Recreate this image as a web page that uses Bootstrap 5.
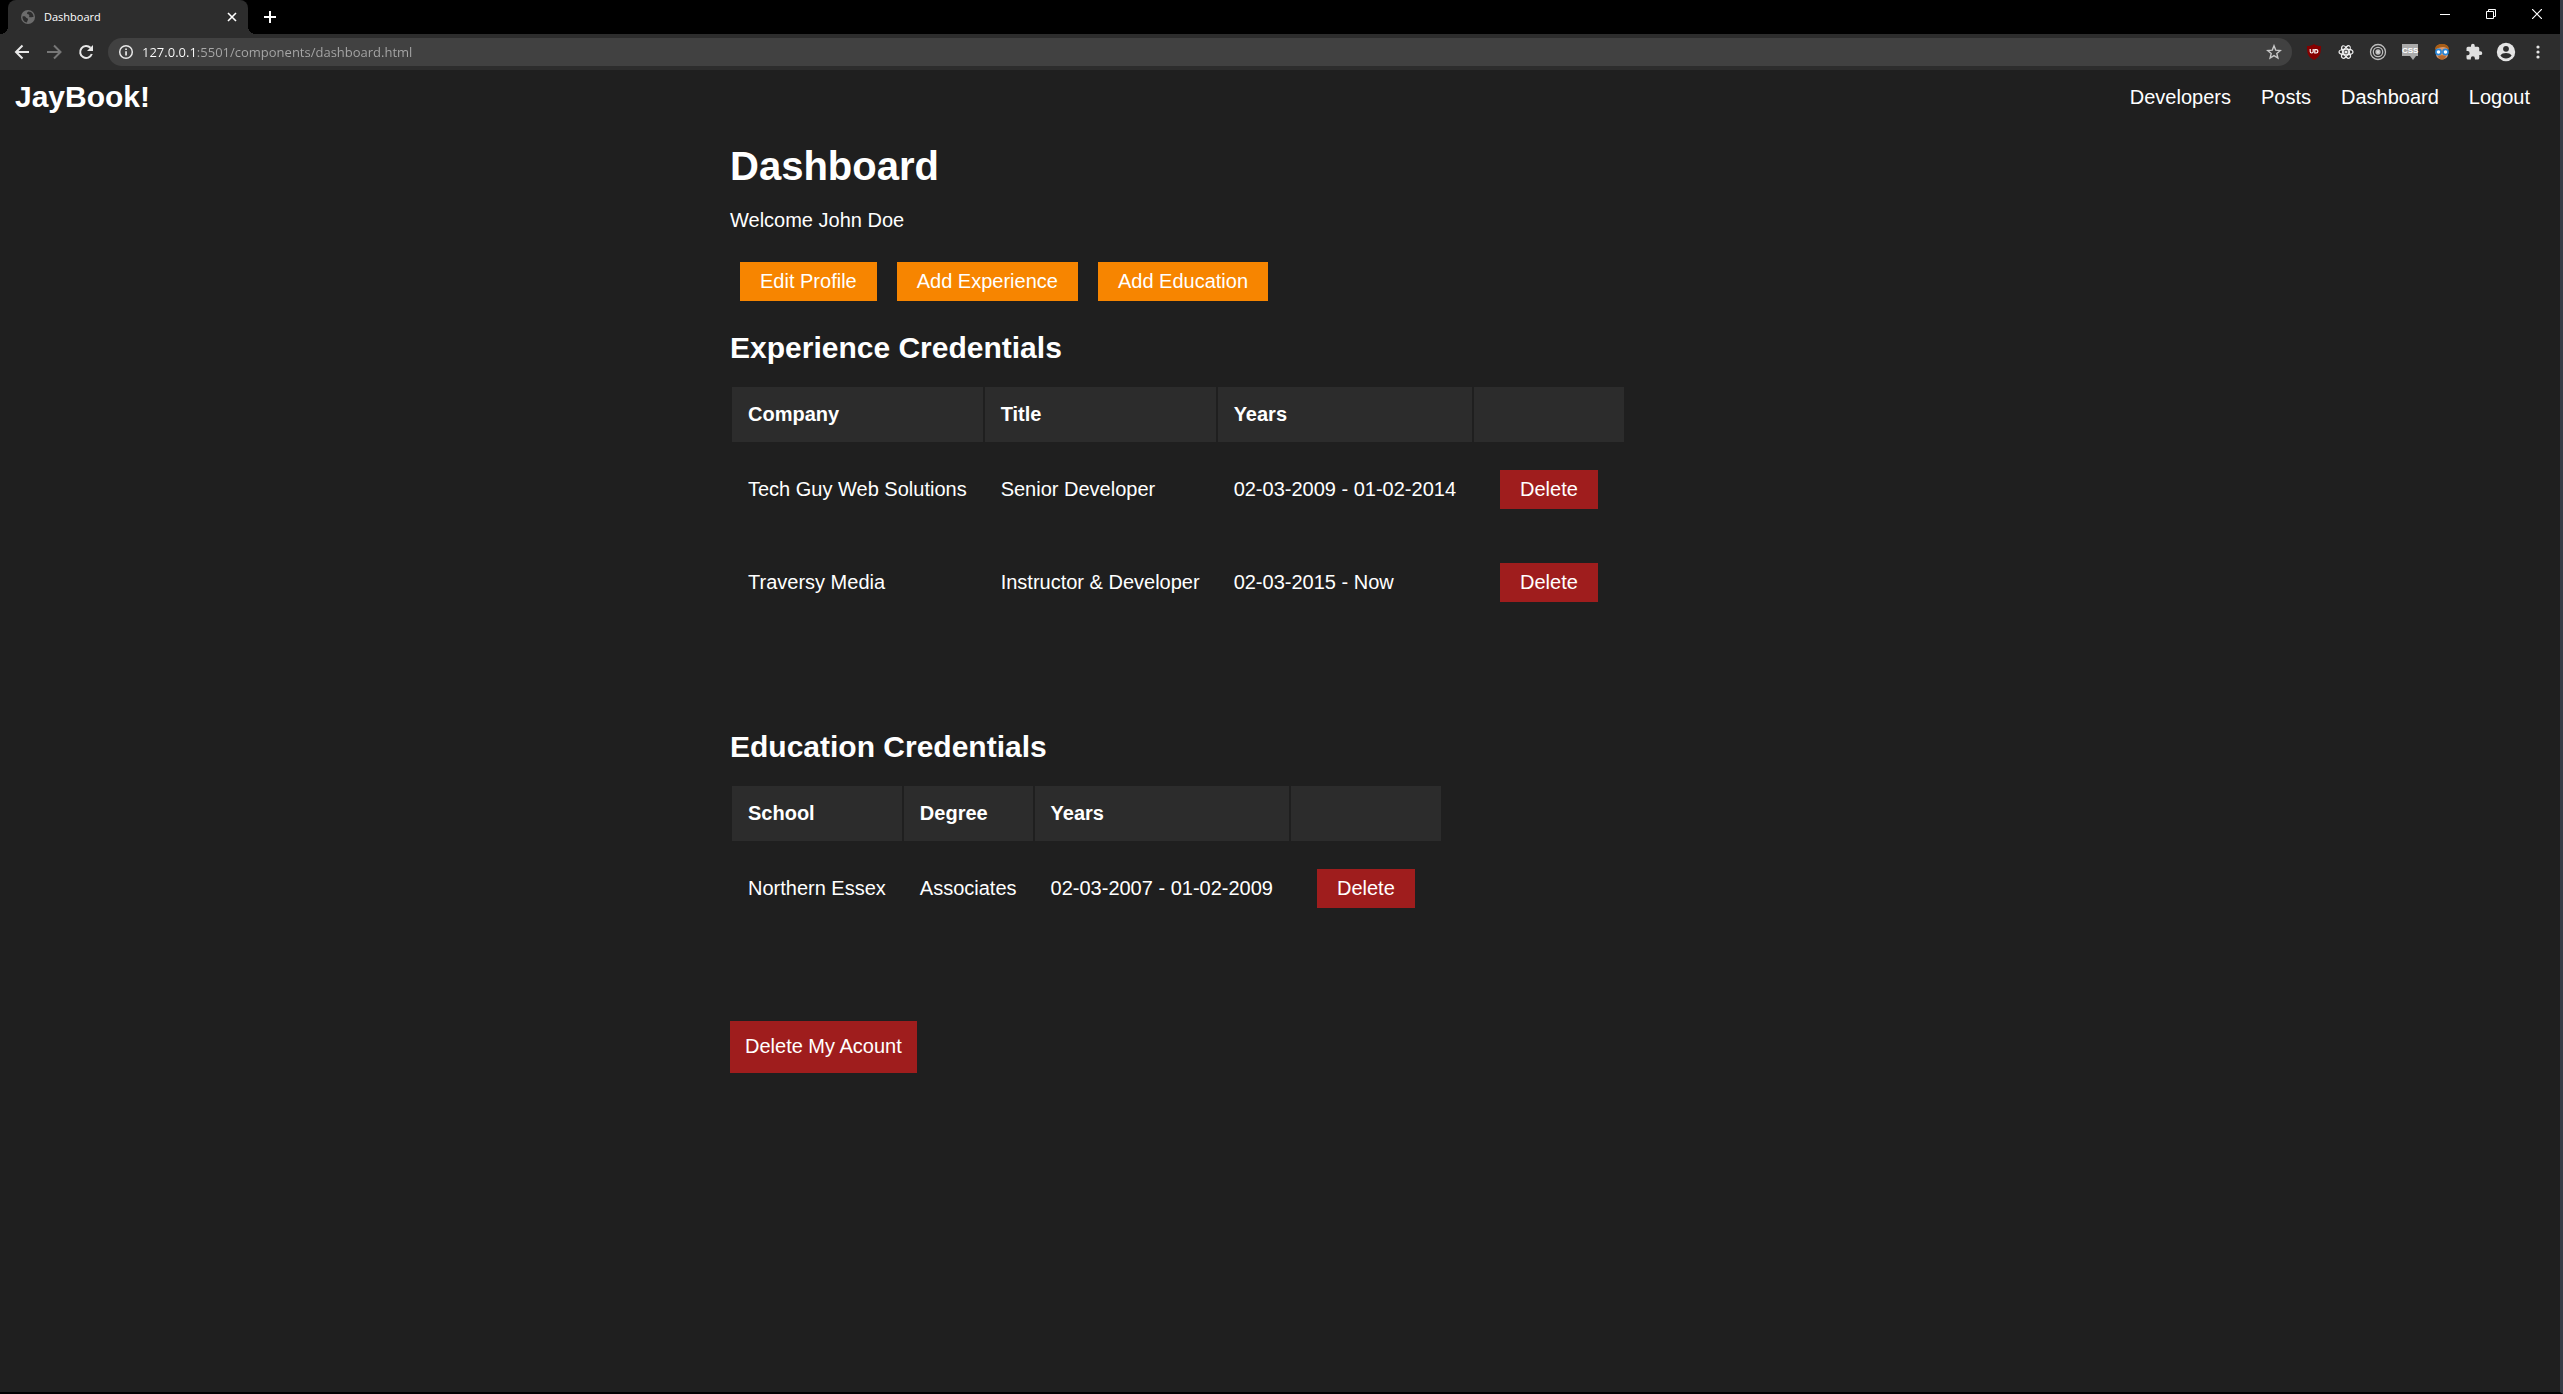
<!DOCTYPE html>
<html lang="en">
<head>
<meta charset="utf-8">
<meta name="viewport" content="width=device-width, initial-scale=1">
<title>Dashboard</title>
<link href="https://cdn.jsdelivr.net/npm/bootstrap@5.3.0/dist/css/bootstrap.min.css" rel="stylesheet">
<style>
  body { background: #1f1f1f; color: #fff; font-family: "Liberation Sans", Arial, sans-serif; font-size: 20px; line-height: 23px; border-right: 3px solid #373b46; border-bottom: 2px solid #000; }
  button { border: 0; padding: 0; background: none; color: inherit; }
  svg { display: block; flex: none; }

  /* browser window */
  .titlebar { background: #000; height: 34px; padding-left: 8px; }
  .tab-item { position: relative; width: 240px; height: 34px; background: #2d2d2d; border-radius: 8px 8px 0 0; padding: 0 10px 0 12px; font: 11px/16px "Open Sans", "Noto Sans", sans-serif; }
  .tab-item::before, .tab-item::after { content: ""; position: absolute; bottom: 0; width: 8px; height: 8px; }
  .tab-item::before { left: -8px; background: radial-gradient(circle at 0 0, #000 8px, #2d2d2d 8px); }
  .tab-item::after { right: -8px; background: radial-gradient(circle at 100% 0, #000 8px, #2d2d2d 8px); }
  .new-tab { margin-left: 14px; }
  .win-btn { width: 46px; height: 28px; }
  .toolbar { background: #2d2d2d; height: 36px; padding: 0 6px 0 14px; }
  .nav-icons { gap: 14px; margin-right: 14px; }
  .address { background: #414141; height: 28px; border-radius: 14px; padding: 0 10px; gap: 8px; }
  .address-input { border: 0; outline: 0; padding: 0; height: 20px; font: 13px/20px "Open Sans", "Noto Sans", sans-serif; color: transparent; background: linear-gradient(90deg, #fff 54px, #a8a8a8 54px); -webkit-background-clip: text; background-clip: text; }
  .ext-icons { margin-left: 6px; }
  .ext-icons button { width: 32px; height: 28px; display: flex; align-items: center; justify-content: center; }
  .css-label { font: 700 8px "Liberation Sans", Arial, sans-serif; }

  /* page */
  .site-nav { padding: 10px 15px; }
  .brand { font-size: 30px; line-height: 34px; font-weight: 700; }
  .site-nav a { color: #fff; text-decoration: none; }
  .site-links { gap: 30px; padding-right: 15px; }
  .page { max-width: 1100px; padding-top: 20px; }
  h1 { font-size: 40px; line-height: 45px; font-weight: 700; margin-bottom: 20px; }
  h2 { font-size: 30px; line-height: 34px; font-weight: 700; margin-bottom: 20px; }
  .page p { margin-bottom: 20px; }
  .actions { margin-bottom: 20px; }
  .action { display: inline-block; padding: 8px 20px; margin: 10px; background: #f78500; color: #fff; text-decoration: none; }
  .danger { background: #9f1d1d; color: #fff; }
  .creds { border-collapse: separate; border-spacing: 2px; white-space: nowrap; }
  .creds th, .creds td { padding: 16px; }
  .creds th { background: #2c2c2c; text-align: left; }
  .credentials { margin-bottom: 100px; }
  .credentials + .credentials { margin-bottom: 85px; }
  .remove { padding: 14px 15px 15px; }
</style>
</head>
<body class="min-vh-100">
<header>
  <div class="titlebar d-flex align-items-center">
    <div class="tab-item d-flex align-items-center">
      <svg width="16" height="16" viewBox="0 0 16 16"><circle cx="8" cy="8" r="7" fill="#6c6c6c"/><path d="M2.500 7.500c2-.5 3 0 3.500 1s2 .5 2 1.800S7 12 7 13.600C4.500 13.200 2.200 11 2.500 7.500zM8.500 2.400c-1 .8-1.800 1.200-1.500 2.200s2 .4 2.300 1.600-.8 1.600.4 2 2-.6 3.800-.2c.2-2.800-1.800-5.400-5-5.600z" fill="#2d2d2d"/></svg>
      <span class="ms-2 flex-grow-1">Dashboard</span>
      <button type="button" aria-label="Close tab"><svg width="12" height="12" viewBox="0 0 12 12" stroke="#fff" stroke-width="1.600"><path d="M2 2l8 8M10 2l-8 8"/></svg></button>
    </div>
    <button class="new-tab" type="button" aria-label="New tab"><svg width="16" height="16" viewBox="0 0 16 16" stroke="#fff" stroke-width="2"><path d="M8 2v12M2 8h12"/></svg></button>
    <div class="d-flex ms-auto align-self-start">
      <button class="win-btn d-flex justify-content-center align-items-center" type="button" aria-label="Minimize"><svg width="10" height="10" viewBox="0 0 10 10" stroke="#fff"><path d="M0 5.500h10"/></svg></button>
      <button class="win-btn d-flex justify-content-center align-items-center" type="button" aria-label="Restore"><svg width="10" height="10" viewBox="0 0 10 10" stroke="#fff" fill="none"><path d="M.5 2.500h7v7h-7zM2.500 2.500v-2h7v7h-2"/></svg></button>
      <button class="win-btn d-flex justify-content-center align-items-center" type="button" aria-label="Close"><svg width="10" height="10" viewBox="0 0 10 10" stroke="#fff" stroke-width="1.200"><path d="M0 0l10 10M10 0L0 10"/></svg></button>
    </div>
  </div>
  <div class="toolbar d-flex align-items-center">
    <div class="nav-icons d-flex">
      <button type="button" aria-label="Back"><svg width="18" height="18" viewBox="0 0 18 18" fill="none" stroke="#e8e8e8" stroke-width="2"><path d="M15 9H2M8.500 2.500L2 9l6.500 6.500"/></svg></button>
      <button type="button" aria-label="Forward"><svg width="18" height="18" viewBox="0 0 18 18" fill="none" stroke="#777" stroke-width="2"><path d="M1 9h13M8 2.500L14.500 9 8 15.500"/></svg></button>
      <button type="button" aria-label="Reload"><svg width="16" height="18" viewBox="0 0 16 18"><path d="M13.800 11a6 6 0 1 1-1.300-6.200" fill="none" stroke="#e8e8e8" stroke-width="2"/><path d="M15 2v6H9z" fill="#e8e8e8"/></svg></button>
    </div>
    <div class="address d-flex align-items-center flex-grow-1">
      <svg width="16" height="16" viewBox="0 0 16 16"><circle cx="8" cy="8" r="6.300" fill="none" stroke="#e8e8e8" stroke-width="1.500"/><path d="M7.200 4.400h1.700v1.700H7.200zM7.200 7.200h1.700v4.400H7.200z" fill="#e8e8e8"/></svg>
      <input class="address-input flex-grow-1" type="text" aria-label="Address" value="127.0.0.1:5501/components/dashboard.html">
      <button type="button" aria-label="Bookmark"><svg width="16" height="16" viewBox="0 0 16 16" fill="none" stroke="#c8c8c8" stroke-width="1.400"><path d="M8 1.800l1.700 4.300 4.600.4-3.500 3 1.100 4.500L8 11.600 4.100 14l1.100-4.500-3.500-3 4.600-.4z"/></svg></button>
    </div>
    <div class="ext-icons d-flex align-items-center">
      <button type="button" aria-label="Ad blocker"><svg width="18" height="18" viewBox="0 0 18 18"><path d="M9 1c2 1.500 4 2 7 2 0 8-1 10.500-7 14C3 13.500 2 11 2 3c3 0 5-.5 7-2z" fill="#850000"/><path d="M5.200 6v2.500a1.500 1.500 0 0 0 3 0V6M9.800 6.600h1.400a1.700 1.700 0 0 1 0 3.400H9.800z" fill="none" stroke="#fff" stroke-width="1.200"/></svg></button>
      <button type="button" aria-label="React tools"><svg width="18" height="18" viewBox="0 0 18 18" fill="none" stroke="#f0f0f0" stroke-width="1.200"><ellipse cx="9" cy="9" rx="7" ry="2.800"/><ellipse cx="9" cy="9" rx="7" ry="2.800" transform="rotate(60 9 9)"/><ellipse cx="9" cy="9" rx="7" ry="2.800" transform="rotate(120 9 9)"/><circle cx="9" cy="9" r="1" fill="#f0f0f0"/></svg></button>
      <button type="button" aria-label="Target"><svg width="18" height="18" viewBox="0 0 18 18" fill="none" stroke="#bdbdbd" stroke-width="1.300"><circle cx="9" cy="9" r="7.500"/><circle cx="9" cy="9" r="4.700"/><circle cx="9" cy="9" r="2" fill="#d8d8d8"/></svg></button>
      <button type="button" aria-label="CSS viewer"><svg width="18" height="18" viewBox="0 0 18 18"><path d="M1 1h16v12h-2l-3 4-3-4H1z" fill="#aaa"/><text class="css-label" x="1" y="10" fill="#fff">CSS</text></svg></button>
      <button type="button" aria-label="Profile extension"><svg width="18" height="18" viewBox="0 0 18 18"><path d="M3 5c0-5 12-5 12 0v6c0 7-12 7-12 0z" fill="#d99b72"/><path d="M2 7c-1-8 15-8 14 0-2-2-4-3-6-3S4 5 2 7z" fill="#a85d16"/><path d="M5 13c2-1 6-1 8 0-1 5-7 5-8 0z" fill="#b86a2c"/><g fill="#fff" stroke="#2685d8" stroke-width="1.600"><circle cx="5.500" cy="9" r="2.600"/><circle cx="12.500" cy="9" r="2.600"/></g></svg></button>
      <button type="button" aria-label="Extensions"><svg width="18" height="18" viewBox="0 0 24 24" fill="#e0e0e0"><path d="M20.500 11H19V7a2 2 0 0 0-2-2h-4V3.500a2.500 2.500 0 0 0-5 0V5H4a2 2 0 0 0-2 2v3.800h1.500a2.700 2.700 0 0 1 0 5.400H2V20a2 2 0 0 0 2 2h3.800v-1.500a2.700 2.700 0 0 1 5.400 0V22H17a2 2 0 0 0 2-2v-4h1.500a2.500 2.500 0 0 0 0-5z"/></svg></button>
      <button type="button" aria-label="Account"><svg width="20" height="20" viewBox="0 0 20 20"><circle cx="10" cy="10" r="9.200" fill="#e4e4e4"/><circle cx="10" cy="6.800" r="2.900" fill="#2d2d2d"/><path d="M4.400 13.400c1.800-3.300 9.400-3.300 11.200 0-2.400 4-8.800 4-11.200 0z" fill="#2d2d2d"/></svg></button>
      <button type="button" aria-label="Menu"><svg width="18" height="18" viewBox="0 0 18 18" fill="#e4e4e4"><circle cx="9" cy="4" r="1.600"/><circle cx="9" cy="9" r="1.600"/><circle cx="9" cy="14" r="1.600"/></svg></button>
    </div>
  </div>
</header>
<nav class="site-nav d-flex justify-content-between align-items-center">
  <a class="brand" href="#">JayBook!</a>
  <div class="site-links d-flex">
    <a href="#">Developers</a>
    <a href="#">Posts</a>
    <a href="#">Dashboard</a>
    <a href="#">Logout</a>
  </div>
</nav>
<main class="page mx-auto">
  <h1>Dashboard</h1>
  <p>Welcome John Doe</p>
  <div class="actions d-flex">
    <a class="action" href="#">Edit Profile</a>
    <a class="action" href="#">Add Experience</a>
    <a class="action" href="#">Add Education</a>
  </div>
  <section class="credentials">
    <h2>Experience Credentials</h2>
    <table class="creds">
      <thead><tr><th>Company</th><th>Title</th><th>Years</th><th></th></tr></thead>
      <tbody>
        <tr><td>Tech Guy Web Solutions</td><td>Senior Developer</td><td>02-03-2009 - 01-02-2014</td><td><button class="action danger d-block" type="button">Delete</button></td></tr>
        <tr><td>Traversy Media</td><td>Instructor &amp; Developer</td><td>02-03-2015 - Now</td><td><button class="action danger d-block" type="button">Delete</button></td></tr>
      </tbody>
    </table>
  </section>
  <section class="credentials">
    <h2>Education Credentials</h2>
    <table class="creds">
      <thead><tr><th>School</th><th>Degree</th><th>Years</th><th></th></tr></thead>
      <tbody>
        <tr><td>Northern Essex</td><td>Associates</td><td>02-03-2007 - 01-02-2009</td><td><button class="action danger d-block" type="button">Delete</button></td></tr>
      </tbody>
    </table>
  </section>
  <button class="remove danger" type="button">Delete My Acount</button>
</main>
<script src="https://cdn.jsdelivr.net/npm/bootstrap@5.3.0/dist/js/bootstrap.bundle.min.js"></script>
</body>
</html>
